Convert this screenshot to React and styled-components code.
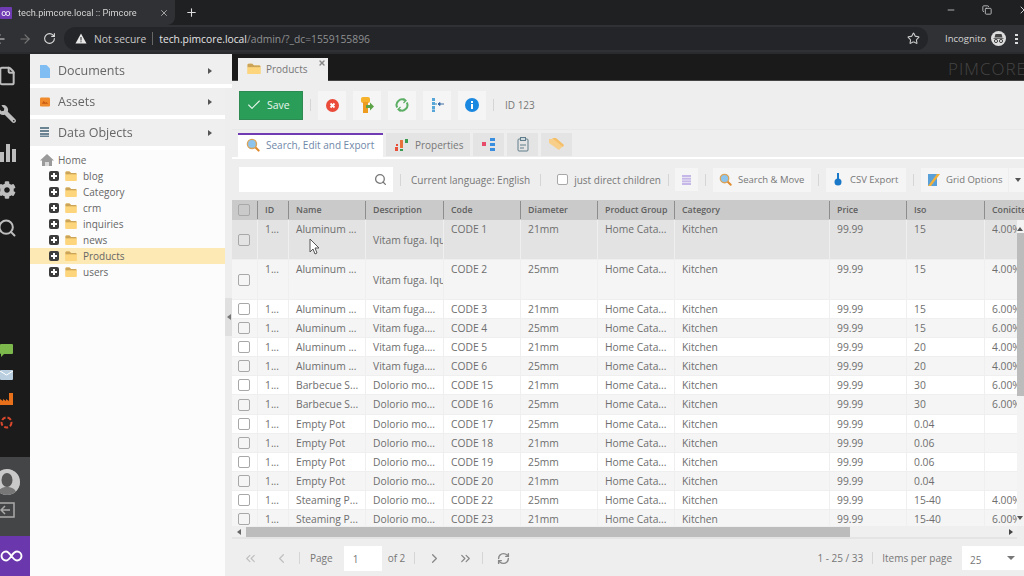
import React from 'react';
import styled, { createGlobalStyle } from 'styled-components';
import { File, Search, ArrowLeft, ArrowRight, RotateCw, Star, Plus, X, Minus, Copy, ChevronLeft, ChevronRight, ChevronsLeft, ChevronsRight, RefreshCw, Check } from 'lucide-react';
import { FaWrench, FaCog } from 'react-icons/fa';

const Global = createGlobalStyle`
  html, body { margin: 0; padding: 0; background: #eee; }
  * { box-sizing: border-box; }
`;

const Screen = styled.div`
  position: relative; width: 1024px; height: 576px; overflow: hidden;
  display: flex; flex-direction: column;
  font-family: "Open Sans", "Liberation Sans", sans-serif; color: #666;
  filter: blur(0.35px);
`;

/* browser chrome */
const TabStrip = styled.div`
  height: 25px; flex: none; background: #1f2022; display: flex; align-items: center; color: #ddd;
`;
const BrowserTab = styled.div`
  width: 175px; height: 25px; background: #303134; border-radius: 0 0 8px 0; display: flex; align-items: center;
  font-family: Roboto, "Open Sans", sans-serif; font-size: 9.2px; color: #d5d5d5; position: relative;
`;
const Favicon = styled.div`
  width: 12px; height: 12px; background: #6f3cb4; color: #fff; font-size: 9px; line-height: 12px; text-align: center; margin-right: 6px; border-radius: 1px; overflow: hidden;
`;
const TabTitle = styled.span`flex: 1; white-space: nowrap;`;
const TabClose = styled.span`display: flex; margin-right: 6px; color: #bbb;`;
const NewTab = styled.span`display: flex; margin-left: 10px; color: #ddd;`;
const WindowControls = styled.div`
  margin-left: auto; display: flex; align-items: center; gap: 26px; margin-right: -6px; color: #ccc; padding-bottom: 6px;
`;
const AddressBar = styled.div`
  height: 29px; flex: none; background: #303134; display: flex; align-items: center; color: #cfcfcf; border-bottom: 2px solid #2a2b2e;
`;
const NavGlyph = styled.span`display: flex; margin-left: ${p => p.$ml}px; color: ${p => p.$dim ? '#777' : '#ddd'};`;
const Omnibox = styled.div`
  width: 864px; height: 23px; margin-left: 8px; background: #242528; border-radius: 12px; display: flex; align-items: center; padding-left: 11px; font-size: 10.3px; white-space: nowrap;
`;
const NotSecure = styled.span`margin-left: 7px; color: #c8c8c8;`;
const UrlDivider = styled.span`width: 1px; height: 13px; background: #666; margin: 0 6px;`;
const UrlHost = styled.span`color: #e4e4e4;`;
const UrlPath = styled.span`color: #8f9193;`;
const StarWrap = styled.span`margin-left: auto; margin-right: 8px; display: flex; color: #ccc;`;
const Incognito = styled.span`margin-left: 17px; font-size: 9.5px; color: #d5d5d5;`;
const IncognitoBadge = styled.span`width: 15px; height: 15px; margin-left: 5px; border-radius: 50%; background: #ddd; display: flex; overflow: hidden;`;
const MenuDots = styled.span`margin-left: 9px; width: 3px; height: 11px; background: radial-gradient(circle, #ddd 1.3px, transparent 1.4px) 0 0 / 3px 4px;`;

/* workspace */
const Workspace = styled.div`flex: 1; min-height: 0; display: flex;`;
const Rail = styled.div`
  width: 30px; flex: none; background: #1b1b1b; display: flex; flex-direction: column; padding-top: 12px;
`;
const RailIcon = styled.span`
  display: flex; align-items: center; justify-content: center; width: 20px; height: 20px; margin-left: -3px; margin-bottom: ${p => p.$last ? 0 : 18}px; color: #bdbdbd;
`;
const WrenchFlip = styled.span`display: flex; transform: scaleX(-1);`;
const Plugins = styled.div`display: flex; flex-direction: column; gap: 11px; margin-top: 106px;`;
const PluginIcon = styled.span`display: flex; width: 13px; height: 13px;`;
const UserBlock = styled.div`
  margin-top: auto; height: 79px; background: #444546; display: flex; flex-direction: column; gap: 7px; padding-top: 12px;
`;
const Avatar = styled.span`display: flex; width: 26px; height: 26px; margin-left: -6px; border-radius: 50%; background: #a8a8a8; overflow: hidden;`;
const LogoutIcon = styled.span`display: flex; width: 16px; height: 16px; color: #aaa;`;
const LogoBlock = styled.div`height: 40px; background: #6a37ad; display: flex; align-items: center;`;

const LeftCol = styled.div`width: 202px; flex: none; background: #eee; padding-top: 3px; display: flex; flex-direction: column; position: relative;`;
const AccordionHead = styled.div`
  height: 27px; flex: none; background: #efefef; margin-right: ${p => p.$wide ? 0 : 7}px; margin-bottom: 4px; display: flex; align-items: center; padding-left: 10px; font-size: 12.5px; color: #666; position: relative;
  box-shadow: 0 4px 0 #fff;
`;
const AccIcon = styled.span`display: flex; width: 10px; height: 12px; margin-right: 8px;`;
const Caret = styled.span`
  position: absolute; right: ${p => p.$r}px; width: 0; height: 0; border-left: 4px solid #555; border-top: 3.5px solid transparent; border-bottom: 3.5px solid transparent;
`;
const Tree = styled.div`flex: 1; margin-top: -4px; margin-right: 7px; background: #fcfcfc; padding-top: 6px;`;
const TreeRow = styled.div`
  height: 16px; display: flex; align-items: center; padding-left: ${p => p.$root ? 10 : 19}px; font-size: 10px; color: #666;
  background: ${p => p.$on ? '#fde9b3' : 'transparent'};
`;
const HomeIcon = styled.span`display: flex; width: 14px; height: 14px; margin-right: 4px;`;
const Expand = styled.span`
  width: 10px; height: 10px; background: #3c3c3c; border-radius: 2px; margin-right: 6px; position: relative; flex: none;
  &::before { content: ''; position: absolute; left: 2px; right: 2px; top: 4px; height: 2px; background: #fff; }
  &::after { content: ''; position: absolute; top: 2px; bottom: 2px; left: 4px; width: 2px; background: #fff; }
`;
const FolderWrap = styled.span`display: flex; margin-right: ${p => p.$mr || 6}px; flex: none;`;
const Splitter = styled.div`
  position: absolute; right: 0; top: 244px; width: 7px; height: 38px; background: #e0e0e0; display: flex; align-items: center; justify-content: center;
  &::before { content: ''; border-right: 4px solid #777; border-top: 3px solid transparent; border-bottom: 3px solid transparent; }
`;

const Main = styled.div`flex: 1; min-width: 0; display: flex; flex-direction: column; background: #eee; overflow: hidden;`;
const DocTabs = styled.div`height: 27px; flex: none; background: #1a1a1a; padding: 4px 0 0 6px; display: flex; border-bottom: 1px solid #444; position: relative;`;
const DocTab = styled.div`
  width: 90px; height: 23px; background: #eee; display: flex; align-items: center; padding: 0 0 2px 9px; font-size: 10px; color: #777; position: relative;
`;
const DocClose = styled.span`position: absolute; right: 2px; top: 1px; display: flex; color: #888;`;
const Brand = styled.span`position: absolute; right: -3px; top: 3px; font-size: 17px; letter-spacing: 1px; color: #444; font-weight: 300;`;

const Toolbar = styled.div`
  height: 49px; flex: none; display: flex; align-items: center; gap: 7px; padding: 0 7px; border-bottom: 1px solid #e8e8e8;
`;
const SaveButton = styled.div`
  width: 64px; height: 29px; background: #2a9d58; border: 1px solid #2c8a52; color: #e8f5ec; display: flex; align-items: center; gap: 5px; padding-left: 6px; font-size: 10.5px;
`;
const Sep = styled.span`width: 1px; height: 12px; background: #d5d5d5; flex: none; margin: 0 ${p => p.$m ?? 0}px;`;
const IconButton = styled.div`
  width: ${p => p.$w || 28}px; height: ${p => p.$h || 29}px; flex: none; background: #f5f5f5; display: flex; align-items: center; justify-content: center; margin-left: ${p => p.$ml || 0}px;
`;
const IdLabel = styled.span`font-size: 10px; color: #777; margin-left: 1px; padding-left: 3px;`;

const InnerTabs = styled.div`height: 27px; flex: none; padding: 3px 0 0 6px; display: flex; gap: 3px;`;
const InnerTab = styled.div`
  height: ${p => p.$on ? 24 : 23}px; width: ${p => p.$w}px; flex: none; display: flex; align-items: center; gap: 6px; font-size: 10px; color: ${p => p.$on ? '#7088a8' : '#777'};
  justify-content: ${p => p.$center ? 'center' : 'flex-start'}; padding: 0 0 ${p => p.$on ? 3 : 0}px ${p => p.$center ? 0 : 8}px;
  background: ${p => p.$on ? '#fff' : '#e4e4e4'};
  border-top: ${p => p.$on ? '2px solid #6f3cb4' : 'none'};
`;
const WhiteRule = styled.div`height: 2px; flex: none; background: #fff;`;
const GridBar = styled.div`
  height: 41px; flex: none; display: flex; align-items: center; padding-left: 7px; font-size: 10px; color: #777; white-space: nowrap;
`;
const SearchBox = styled.div`
  width: 154px; height: 25px; background: #fff; flex: none; margin-right: 7px; display: flex; align-items: center; justify-content: flex-end; padding-right: 6px; color: #777;
`;
const Lang = styled.span`margin: 0 10px; font-size: 10px;`;
const Box = styled.span`
  width: ${p => p.$s || 11}px; height: ${p => p.$s || 11}px; flex: none; border: 1px solid #a8a8a8; border-radius: 2px; background: ${p => p.$fill || '#fff'}; display: block;
`;
const DirectLabel = styled.label`display: flex; align-items: center; gap: 6px; margin: 0 7px 0 16px;`;
const BarButton = styled.div`
  height: 24px; width: ${p => p.$w}px; flex: none; background: #f5f5f5; display: flex; align-items: center; gap: 6px; padding-left: 6px; font-size: 9.5px; color: #777;
`;
const MoreButton = styled.div`
  height: 24px; width: 20px; flex: none; background: #f5f5f5; margin-left: 1px; display: flex; align-items: center; padding-left: 6px;
  &::before { content: ''; border-top: 4px solid #555; border-left: 3.5px solid transparent; border-right: 3.5px solid transparent; }
`;

const cols = '26px 31px 77px 78px 77px 77px 77px 155px 77px 78px 33px';
const headCols = '26px 31px 77px 78px 77px 77px 77px 155px 77px 78px 40px';
const HeadRow = styled.div`
  height: 20px; flex: none; display: grid; grid-template-columns: ${headCols}; background: #cacaca; font-size: 8.8px; font-weight: 600; color: #5f5f5f; white-space: nowrap;
`;
const HeadCell = styled.div`
  display: flex; align-items: center; padding: 0 0 1px ${p => p.$pl ?? 7}px; overflow: hidden; border-right: 1px solid #8d8d8d; margin: 1px 0;
  &:last-child { border-right: none; }
`;
const BodyWrap = styled.div`height: 306px; flex: none; display: flex; overflow: hidden;`;
const Rows = styled.div`width: 785px; flex: none; overflow: hidden;`;
const Row = styled.div`
  display: grid; grid-template-columns: ${cols}; height: ${p => p.$h}px; background: ${p => p.$bg};
  font-size: 10.3px; color: #6e6e6e; white-space: nowrap;
`;
const Cell = styled.div`
  overflow: hidden; padding: ${p => p.$mid ? 14 : 3}px 0 0 7px; border-right: 1px solid #efefef; border-bottom: 1px solid #efefef; line-height: 13px;
  &:last-child { border-right: none; padding-right: 0; }
`;
const CheckCell = styled.div`
  display: flex; align-items: center; padding-left: 6px; border-right: 1px solid #efefef; border-bottom: 1px solid #efefef;
`;
const VScroll = styled.div`
  width: 7px; flex: none; background: #f3f3f3; padding-top: 13px; display: flex; flex-direction: column; position: relative;
`;
const VThumb = styled.div`height: 163px; background: #bcbcbc;`;
const ArrowUp = styled.span`position: absolute; top: 7px; left: 0; border-bottom: 4px solid #555; border-left: 3px solid transparent; border-right: 3px solid transparent;`;
const ArrowDown = styled.span`position: absolute; bottom: 6px; left: 0; border-top: 4px solid #555; border-left: 3px solid transparent; border-right: 3px solid transparent;`;
const HScroll = styled.div`height: 13px; flex: none; width: 785px; background: #efefef; display: flex; align-items: center; border-bottom: 2px solid #e4e4e4;`;
const HThumb = styled.div`height: 10px; width: 604px; margin-left: 14px; background: #bcbcbc;`;
const HArrowL = styled.span`position: absolute; margin-left: 5px; border-right: 4px solid #666; border-top: 3px solid transparent; border-bottom: 3px solid transparent;`;
const HArrowR = styled.span`margin-left: auto; margin-right: 4px; border-left: 4px solid #444; border-top: 3px solid transparent; border-bottom: 3px solid transparent;`;
const Pager = styled.div`flex: 1; display: flex; align-items: center; font-size: 10px; color: #777; padding: 1px 0 0 11px; white-space: nowrap;`;
const PagerGlyph = styled.span`display: flex; color: ${p => p.$dim ? '#c0c0c0' : '#888'}; margin-left: ${p => p.$ml || 0}px;`;
const PageInput = styled.div`width: 38px; height: 25px; background: #fff; margin: 0 6px 0 11px; padding: 6px 0 0 9px; line-height: 15px; flex: none;`;
const Counter = styled.span`margin-left: auto;`;
const PerPage = styled.div`width: 62px; height: 24px; flex: none; margin-left: 10px; background: #fff; display: flex; align-items: center; padding: 3px 0 0 8px; position: relative;
  &::after { content: ''; position: absolute; right: 9px; top: 10px; border-top: 4px solid #777; border-left: 4px solid transparent; border-right: 4px solid transparent; }
`;
const CursorOverlay = styled.span`position: absolute; left: 309px; top: 238px; display: flex;`;

const Folder = ({ s = 12 }) => (
  <svg width={s} height={s * 0.85} viewBox="0 0 24 20">
    <path d="M1 3a2 2 0 0 1 2-2h6l3 3h9a2 2 0 0 1 2 2v12a2 2 0 0 1-2 2H3a2 2 0 0 1-2-2z" fill="#f7c55f" />
    <path d="M1 3a2 2 0 0 1 2-2h6l3 3h9a2 2 0 0 1 2 2v1H1z" fill="#c9a45a" />
    <path d="M1 7h22v11a2 2 0 0 1-2 2H3a2 2 0 0 1-2-2z" fill="#fdd57c" />
  </svg>
);
const Magnifier = ({ s = 14 }) => (
  <svg width={s} height={s} viewBox="0 0 20 20">
    <line x1="13" y1="13" x2="18" y2="18" stroke="#e08a2e" strokeWidth="3" strokeLinecap="round" />
    <circle cx="8.5" cy="8.5" r="6.5" fill="#8cc4ee" stroke="#d9a35a" strokeWidth="2" />
  </svg>
);

const cell3 = [
  ['Aluminum ...', 'Vitam fuga....', 'CODE 3', '21mm', '15', '6.00%'],
  ['Aluminum ...', 'Vitam fuga....', 'CODE 4', '25mm', '15', '6.00%'],
  ['Aluminum ...', 'Vitam fuga....', 'CODE 5', '21mm', '20', '4.00%'],
  ['Aluminum ...', 'Vitam fuga....', 'CODE 6', '25mm', '20', '4.00%'],
  ['Barbecue S...', 'Dolorio mo...', 'CODE 15', '21mm', '30', '6.00%'],
  ['Barbecue S...', 'Dolorio mo...', 'CODE 16', '25mm', '30', '6.00%'],
  ['Empty Pot', 'Dolorio mo...', 'CODE 17', '25mm', '0.04', ''],
  ['Empty Pot', 'Dolorio mo...', 'CODE 18', '21mm', '0.06', ''],
  ['Empty Pot', 'Dolorio mo...', 'CODE 19', '25mm', '0.06', ''],
  ['Empty Pot', 'Dolorio mo...', 'CODE 20', '21mm', '0.04', ''],
  ['Steaming P...', 'Dolorio mo...', 'CODE 22', '25mm', '15-40', '4.00%'],
  ['Steaming P...', 'Dolorio mo...', 'CODE 23', '21mm', '15-40', '6.00%'],
];
const tall = [
  ['Aluminum ...', 'Vitam fuga. Iqu', 'CODE 1', '21mm', '15', '4.00%', '#e3e3e3'],
  ['Aluminum ...', 'Vitam fuga. Iqu', 'CODE 2', '25mm', '15', '4.00%', '#f5f5f5'],
];
const headers = ['ID', 'Name', 'Description', 'Code', 'Diameter', 'Product Group', 'Category', 'Price', 'Iso', 'Coniciteit'];

const DataRow = ({ d, h, bg, isTall }) => (
  <Row $h={h} $bg={bg}>
    <CheckCell><Box $s={12} $fill="transparent" /></CheckCell>
    <Cell>1...</Cell>
    <Cell>{d[0]}</Cell>
    <Cell $mid={isTall}>{d[1]}</Cell>
    <Cell>{d[2]}</Cell>
    <Cell>{d[3]}</Cell>
    <Cell>Home Cata...</Cell>
    <Cell>Kitchen</Cell>
    <Cell>99.99</Cell>
    <Cell>{d[4]}</Cell>
    <Cell>{d[5]}</Cell>
  </Row>
);

export default function App() {
  return (
    <Screen>
      <Global />
      <TabStrip>
        <BrowserTab>
          <Favicon>∞</Favicon>
          <TabTitle>tech.pimcore.local :: Pimcore</TabTitle>
          <TabClose><X size={10} /></TabClose>
        </BrowserTab>
        <NewTab><Plus size={13} /></NewTab>
        <WindowControls>
          <Minus size={10} />
          <Copy size={10} />
          <X size={12} />
        </WindowControls>
      </TabStrip>
      <AddressBar>
        <NavGlyph $ml={-7}><ArrowLeft size={14} /></NavGlyph>
        <NavGlyph $dim $ml={11}><ArrowRight size={14} /></NavGlyph>
        <NavGlyph $ml={11}><RotateCw size={13} /></NavGlyph>
        <Omnibox>
          <svg width="12" height="11" viewBox="0 0 24 22"><path d="M12 1 1 21h22z" fill="#e8e8e8" /><rect x="11" y="8" width="2" height="7" fill="#242528" /><rect x="11" y="16.5" width="2" height="2" fill="#242528" /></svg>
          <NotSecure>Not secure</NotSecure>
          <UrlDivider />
          <UrlHost>tech.pimcore.local</UrlHost>
          <UrlPath>/admin/?_dc=1559155896</UrlPath>
          <StarWrap><Star size={13} /></StarWrap>
        </Omnibox>
        <Incognito>Incognito</Incognito>
        <IncognitoBadge>
          <svg width="15" height="15" viewBox="0 0 15 15"><path d="M4.5 3h6l1 3.5h-8zM2.5 7h10v.8h-10z" fill="#444" /><circle cx="5" cy="10" r="1.6" fill="none" stroke="#444" /><circle cx="10" cy="10" r="1.6" fill="none" stroke="#444" /></svg>
        </IncognitoBadge>
        <MenuDots />
      </AddressBar>
      <Workspace>
        <Rail>
          <RailIcon><File size={20} strokeWidth={2.4} /></RailIcon>
          <RailIcon><WrenchFlip><FaWrench size={18} /></WrenchFlip></RailIcon>
          <RailIcon>
            <svg width="20" height="20" viewBox="0 0 20 20" fill="#bdbdbd"><rect x="3" y="10" width="4" height="10" /><rect x="9" y="2" width="4" height="18" /><rect x="15" y="7" width="4" height="13" /></svg>
          </RailIcon>
          <RailIcon><FaCog size={18} /></RailIcon>
          <RailIcon $last><Search size={20} strokeWidth={2.4} /></RailIcon>
          <Plugins>
            <PluginIcon><svg width="13" height="13" viewBox="0 0 13 13"><path d="M1 0h11a1 1 0 0 1 1 1v8a1 1 0 0 1-1 1H4l-3 3v-3H1a1 1 0 0 1-1-1V1a1 1 0 0 1 1-1z" fill="#7cb84b" /></svg></PluginIcon>
            <PluginIcon><svg width="13" height="13" viewBox="0 0 13 13"><rect y="2" width="13" height="10" rx="1" fill="#b9cfdf" /><path d="M0 3l6.5 4L13 3" fill="none" stroke="#fff" /></svg></PluginIcon>
            <PluginIcon><svg width="13" height="13" viewBox="0 0 13 13"><path d="M0 13V7l3 2V7l3 2V7l3 2V1h4v12z" fill="#e8701a" /></svg></PluginIcon>
            <PluginIcon><svg width="13" height="13" viewBox="0 0 13 13"><circle cx="6.5" cy="6.5" r="5" fill="none" stroke="#d9482c" strokeWidth="2" strokeDasharray="4 2" /></svg></PluginIcon>
          </Plugins>
          <UserBlock>
            <Avatar><svg width="26" height="26" viewBox="0 0 26 26"><circle cx="13" cy="13" r="13" fill="#c9c9c9" /><ellipse cx="13" cy="11" rx="5.5" ry="7" fill="#555" /><path d="M3 26c1-6 5-8 10-8s9 2 10 8z" fill="#777" /></svg></Avatar>
            <LogoutIcon><svg width="16" height="16" viewBox="0 0 16 16" fill="none" stroke="currentColor" strokeWidth="1.5"><path d="M-2 1h16v14H-2M10 8H1M5 4 1 8l4 4" /></svg></LogoutIcon>
          </UserBlock>
          <LogoBlock>
            <svg width="24" height="16" viewBox="0 0 24 16" fill="none" stroke="#fff" strokeWidth="1.9"><path d="M6 3.5a4.500 4.500 0 1 0 0 9c4.500 0 6-9 11-9a4.500 4.500 0 1 1 0 9c-5 0-6.500-9-11-9z" /></svg>
          </LogoBlock>
        </Rail>
        <LeftCol>
          <AccordionHead $wide>
            <AccIcon><svg width="10" height="13" viewBox="0 0 10 13"><path d="M0 0h6.500L10 3.500V13H0z" fill="#7fbdf2" /></svg></AccIcon>
            Documents<Caret $r={20} />
          </AccordionHead>
          <AccordionHead>
            <AccIcon><svg width="11" height="11" viewBox="0 0 11 11"><rect width="11" height="10" y="1" rx="1.500" fill="#ef8b2c" /><path d="M2 8l2-3 2 2 1-1 2 2z" fill="#c85a12" /></svg></AccIcon>
            Assets<Caret $r={13} />
          </AccordionHead>
          <AccordionHead>
            <AccIcon><svg width="10" height="10" viewBox="0 0 10 10" fill="#6a8494"><rect width="9" height="2" /><rect y="3" width="9" height="2" /><rect y="6" width="9" height="2" /><rect y="8.500" width="9" height="1.500" /></svg></AccIcon>
            Data Objects<Caret $r={13} />
          </AccordionHead>
          <Tree>
            <TreeRow $root>
              <HomeIcon><svg width="14" height="14" viewBox="0 0 14 14"><path d="M7 1 0 7.500h2V13h10V7.500h2z" fill="#9a9a9a" /><path d="M5 13V9h4v4z" fill="#d9d9d9" /></svg></HomeIcon>
              Home
            </TreeRow>
            {['blog', 'Category', 'crm', 'inquiries', 'news', 'Products', 'users'].map(n => (
              <TreeRow key={n} $on={n === 'Products'}>
                <Expand />
                <FolderWrap><Folder /></FolderWrap>
                {n}
              </TreeRow>
            ))}
          </Tree>
          <Splitter />
        </LeftCol>
        <Main>
          <DocTabs>
            <DocTab>
              <FolderWrap $mr={5}><Folder s={14} /></FolderWrap>
              Products
              <DocClose><X size={8} strokeWidth={4} /></DocClose>
            </DocTab>
            <Brand>PIMCORE</Brand>
          </DocTabs>
          <Toolbar>
            <SaveButton><Check size={16} strokeWidth={1.6} />Save</SaveButton>
            <Sep />
            <IconButton>
              <svg width="13" height="13" viewBox="0 0 13 13"><circle cx="6.500" cy="6.500" r="6.500" fill="#ea4b3a" /><path d="M4.500 4.500l4 4M8.500 4.500l-4 4" stroke="#fff" strokeWidth="1.800" /></svg>
            </IconButton>
            <IconButton>
              <svg width="14" height="17" viewBox="0 0 14 17"><rect x="1" y="0" width="9" height="6" rx="2" fill="#f6b22a" /><rect x="3" y="5" width="5" height="11" fill="#ee9c1f" /><path d="M6 8h4V5.500l4 4-4 4V11H6z" fill="#5ba346" /></svg>
            </IconButton>
            <IconButton>
              <svg width="14" height="14" viewBox="0 0 14 14" fill="none" stroke="#5bae63" strokeWidth="2"><path d="M2.200 9.500A5.500 5.500 0 0 1 10 2.300M11.800 4.500A5.500 5.500 0 0 1 4 11.700" /><path d="M8.500 0.500 11 2.500 8.500 5M5.500 9 3 11.500 5.500 13.500" strokeWidth="1.200" /></svg>
            </IconButton>
            <IconButton>
              <svg width="14" height="14" viewBox="0 0 14 14"><rect x="2" y="0" width="3" height="3" fill="#56a7d8" /><rect x="2" y="4" width="3" height="3" fill="#56a7d8" /><rect x="2" y="8" width="3" height="3" fill="#56a7d8" /><rect x="2" y="11.500" width="3" height="2.500" fill="#56a7d8" /><rect x="5" y="5" width="2" height="2" fill="#8fbed8" /><path d="M8 6h6M8 6l2-1.500v3z" stroke="#3a6ca8" fill="#3a6ca8" /></svg>
            </IconButton>
            <IconButton>
              <svg width="14" height="14" viewBox="0 0 14 14"><circle cx="7" cy="7" r="7" fill="#1a88e0" /><rect x="6" y="6" width="2" height="5" fill="#fff" /><rect x="6" y="3" width="2" height="2" fill="#fff" /></svg>
            </IconButton>
            <Sep />
            <IdLabel>ID 123</IdLabel>
          </Toolbar>
          <InnerTabs>
            <InnerTab $on $w={145}><Magnifier />Search, Edit and Export</InnerTab>
            <InnerTab $w={84}>
              <svg width="15" height="14" viewBox="0 0 15 14"><rect x="1" y="9" width="3" height="4" fill="#e8503a" /><rect x="2" y="6" width="2" height="2" fill="#e8503a" /><rect x="6" y="2" width="3" height="8" fill="#e8703a" /><rect x="11" y="1" width="3" height="4" fill="#3a9a50" /><rect x="6" y="11" width="3" height="2" fill="#3a9a50" /></svg>
              Properties
            </InnerTab>
            <InnerTab $w={31} $center>
              <svg width="14" height="13" viewBox="0 0 14 13"><rect x="0" y="4" width="4" height="4" fill="#e84a6a" /><rect x="8" y="0" width="5" height="3" fill="#3a8ee0" /><rect x="8" y="5" width="5" height="3" fill="#3a8ee0" /><rect x="8" y="10" width="5" height="3" fill="#3a8ee0" /></svg>
            </InnerTab>
            <InnerTab $w={31} $center>
              <svg width="12" height="15" viewBox="0 0 12 15" fill="none" stroke="#607d8b"><rect x="1" y="2" width="10" height="12" rx="1" /><rect x="3.500" y="0.500" width="5" height="3" fill="#cfd8dc" /><path d="M3 8h6M3 11h4" /></svg>
            </InnerTab>
            <InnerTab $w={31} $center>
              <svg width="15" height="13" viewBox="0 0 15 13"><path d="M0 1h6l8 7-4 4-10-7z" fill="#f8cf8a" /><path d="M3 0h4l8 7-1 2z" fill="#f5be68" /></svg>
            </InnerTab>
          </InnerTabs>
          <WhiteRule />
          <GridBar>
            <SearchBox><Search size={13} strokeWidth={2.4} /></SearchBox>
            <Sep />
            <Lang>Current language: English</Lang>
            <Sep />
            <DirectLabel><Box $s={11} />just direct children</DirectLabel>
            <Sep />
            <IconButton $w={23} $h={23} $ml={6}>
              <svg width="9" height="10" viewBox="0 0 9 10" fill="#c5b8e8"><rect width="9" height="2" /><rect y="2.700" width="9" height="2" /><rect y="5.400" width="9" height="2" /><rect y="8" width="9" height="2" /></svg>
            </IconButton>
            <Sep $m={7} />
            <BarButton $w={98}><Magnifier s={13} />Search &amp; Move</BarButton>
            <Sep $m={7} />
            <BarButton $w={80}>
              <svg width="12" height="13" viewBox="0 0 12 13"><path d="M6 0 6 7" stroke="#1a78c8" strokeWidth="2" /><circle cx="6" cy="9" r="3.500" fill="#1a78c8" /></svg>
              CSV Export
            </BarButton>
            <Sep $m={7} />
            <BarButton $w={87}>
              <svg width="13" height="14" viewBox="0 0 13 14"><rect x="1" y="1" width="9" height="12" fill="#5aa0d8" /><path d="M1 13 10 1h3L4 13z" fill="#f3b13a" /></svg>
              Grid Options
            </BarButton>
            <MoreButton />
          </GridBar>
          <HeadRow>
            <HeadCell $pl={6}><Box $s={12} $fill="transparent" /></HeadCell>
            {headers.map(h => <HeadCell key={h}>{h}</HeadCell>)}
          </HeadRow>
          <BodyWrap>
            <Rows>
              {tall.map(d => <DataRow key={d[2]} d={d} h={40} bg={d[6]} isTall />)}
              {cell3.map((d, i) => <DataRow key={d[2]} d={d} h={19.1} bg={i % 2 ? '#f5f5f5' : '#fff'} />)}
            </Rows>
            <VScroll><ArrowUp /><VThumb /><ArrowDown /></VScroll>
          </BodyWrap>
          <HScroll><HArrowL /><HThumb /><HArrowR /></HScroll>
          <Pager>
            <PagerGlyph $dim><ChevronsLeft size={15} /></PagerGlyph>
            <PagerGlyph $dim $ml={16}><ChevronLeft size={15} /></PagerGlyph>
            <Sep $m={10} />
            Page
            <PageInput>1</PageInput>
            of 2
            <Sep $m={9} />
            <PagerGlyph $ml={3}><ChevronRight size={15} /></PagerGlyph>
            <PagerGlyph $ml={16}><ChevronsRight size={15} /></PagerGlyph>
            <Sep $m={9} />
            <PagerGlyph $ml={5}><RefreshCw size={13} strokeWidth={2.6} /></PagerGlyph>
            <Counter>1 - 25 / 33</Counter>
            <Sep $m={9} />
            Items per page
            <PerPage>25</PerPage>
          </Pager>
        </Main>
      </Workspace>
      <CursorOverlay>
        <svg width="12" height="17" viewBox="0 0 12 17"><path d="M1 1v13l3-3 2 5 2-1-2-5h4z" fill="#fff" stroke="#555" /></svg>
      </CursorOverlay>
    </Screen>
  );
}
